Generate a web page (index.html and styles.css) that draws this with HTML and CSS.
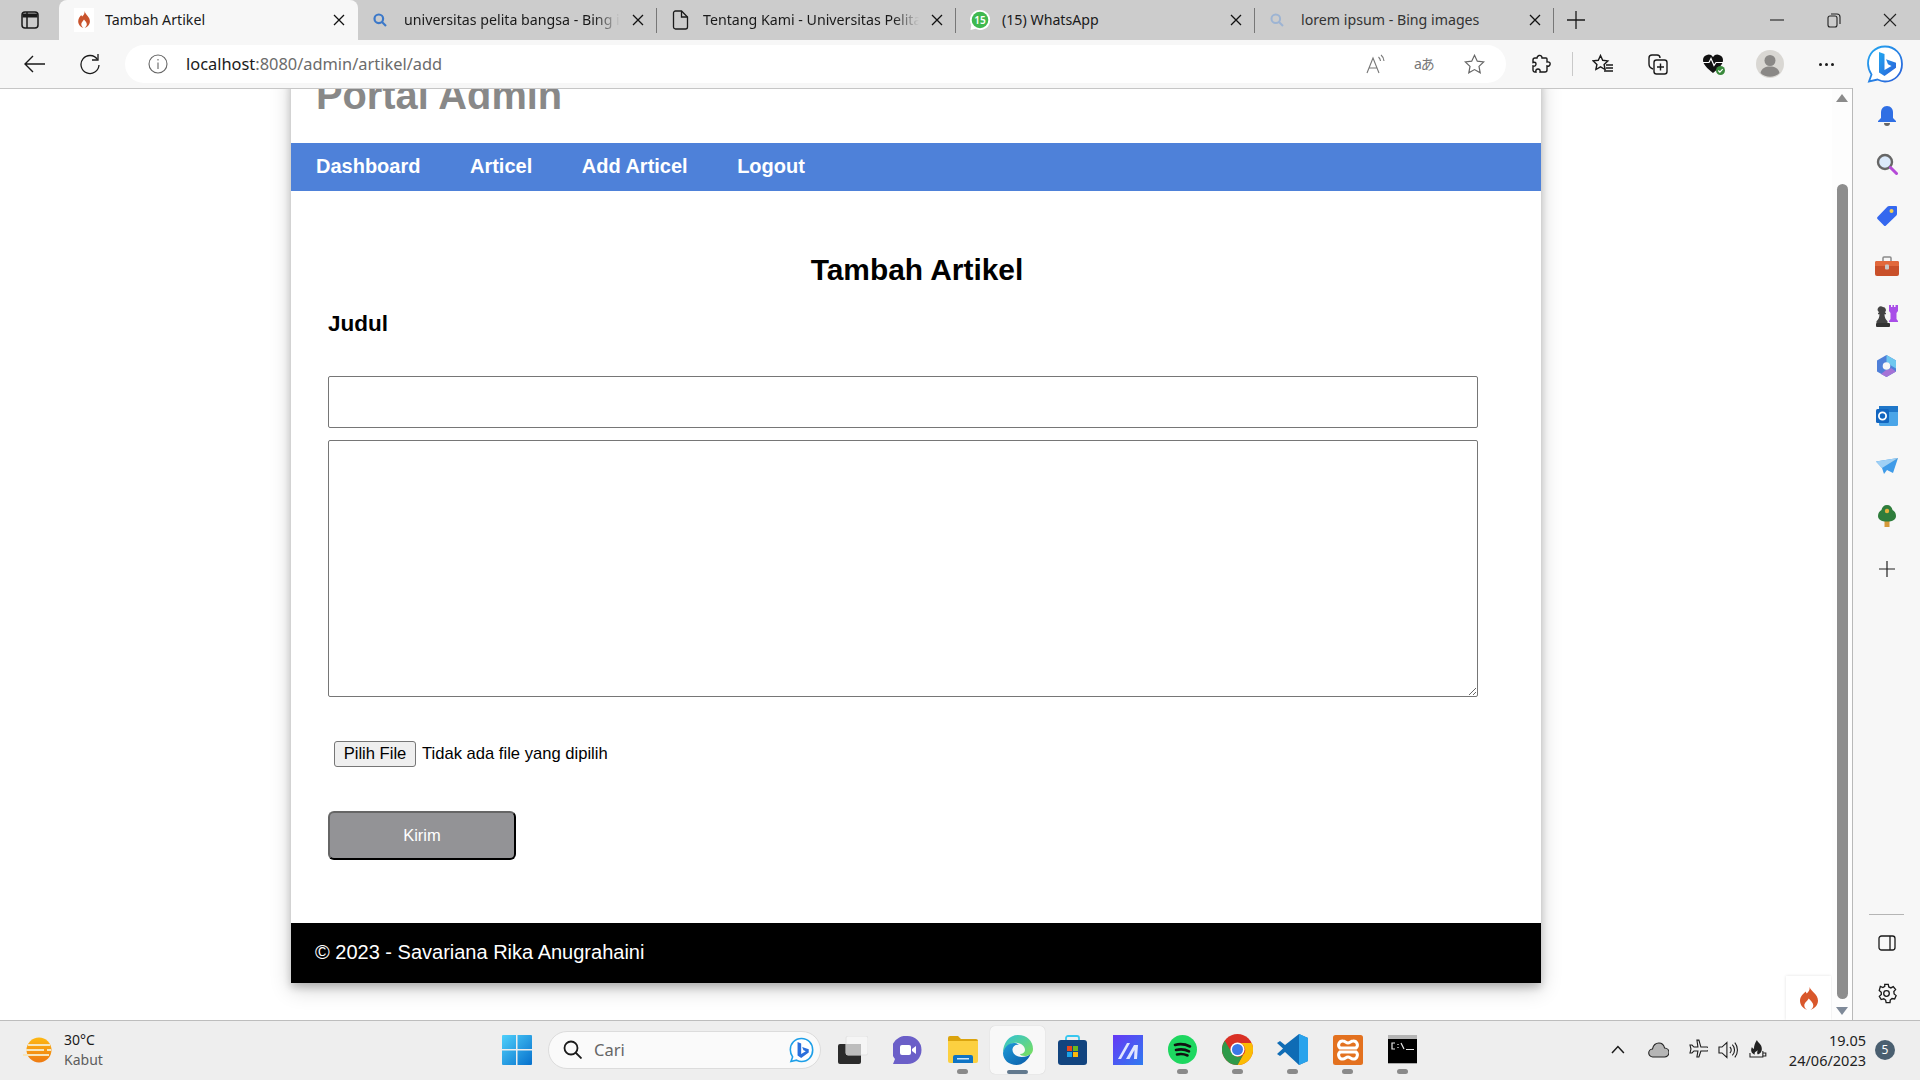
FILE: index.html
```html
<!DOCTYPE html>
<html lang="id">
<head>
<meta charset="utf-8">
<title>Tambah Artikel</title>
<link rel="stylesheet" href="styles.css">
</head>
<body>
<div class="app">

  <div class="tabbar">
    <div class="tab-toggle">
      <svg width="18" height="18" viewBox="0 0 18 18" fill="none" stroke="#1a1a1a"><rect x="1" y="1" width="16" height="16" rx="3" stroke-width="1.5"/><path d="M6 1v16" stroke-width="1.5"/><path d="M1.5 4.5h15" stroke-width="4"/></svg>
    </div>
    <div class="tab tab-active">
      <span class="tab-icon"><svg width="20" height="24" viewBox="0 0 20 24"><rect width="20" height="24" fill="#fff"/><path fill="#c9532c" d="M10.5 3c.6 2.6-1 4-2.4 5.600-.5-.6-.7-1.200-.7-1.700C5.700 8.500 4.200 10.700 4.200 13.200c0 3.200 2.200 5.800 5.200 6.600-1.300-.8-2.100-2.100-2.100-3.500 0-1.700 1.500-2.800 2.700-4.800 1.300 1.500 2.800 3 2.800 4.800 0 1.400-.8 2.700-2.100 3.500 3-.8 5.200-3.400 5.200-6.600C15.900 8.800 11.800 7.200 10.500 3z"/></svg></span>
      <span class="tab-title">Tambah Artikel</span>
      <svg class="tab-close" width="12" height="12" viewBox="0 0 12 12"><path d="M1 1l10 10M11 1L1 11" stroke="#111" stroke-width="1.300"/></svg>
    </div>
    <div class="tab">
      <span class="tab-icon"><svg width="14" height="14" viewBox="0 0 14 14" fill="none" stroke="#3b78c9" stroke-width="2.200"><circle cx="5.800" cy="5.800" r="4.300"/><path d="M9 9l4 4"/></svg></span>
      <span class="tab-title tab-fade">universitas pelita bangsa - Bing images</span>
      <svg class="tab-close" width="12" height="12" viewBox="0 0 12 12"><path d="M1 1l10 10M11 1L1 11" stroke="#111" stroke-width="1.300"/></svg>
    </div>
    <div class="tab">
      <span class="tab-icon"><svg width="17" height="20" viewBox="0 0 17 20" fill="none" stroke="#1a1a1a" stroke-width="1.300"><path d="M3.500 1h6l6 6v10a2 2 0 0 1-2 2h-10a2 2 0 0 1-2-2V3a2 2 0 0 1 2-2z"/><path d="M9.500 1v6h6"/></svg></span>
      <span class="tab-title tab-fade">Tentang Kami - Universitas Pelita Bangsa</span>
      <svg class="tab-close" width="12" height="12" viewBox="0 0 12 12"><path d="M1 1l10 10M11 1L1 11" stroke="#111" stroke-width="1.300"/></svg>
    </div>
    <div class="tab">
      <span class="tab-icon tab-icon-wa"><svg width="20" height="24" viewBox="0 0 20 24"><path fill="#fff" d="M10 2a10 10 0 0 0-8.700 15L.5 22l5-1.200A10 10 0 1 0 10 2z"/><circle cx="10" cy="12" r="8.300" fill="#3fb94f"/><text class="wa-count" x="10" y="15.600" text-anchor="middle">15</text></svg></span>
      <span class="tab-title">(15) WhatsApp</span>
      <svg class="tab-close" width="12" height="12" viewBox="0 0 12 12"><path d="M1 1l10 10M11 1L1 11" stroke="#111" stroke-width="1.300"/></svg>
    </div>
    <div class="tab tab-loading">
      <span class="tab-icon"><svg width="14" height="14" viewBox="0 0 14 14" fill="none" stroke="#9db4d3" stroke-width="2"><circle cx="5.800" cy="5.800" r="4.300"/><path d="M9 9l4 4"/></svg></span>
      <span class="tab-title">lorem ipsum - Bing images</span>
      <svg class="tab-close" width="12" height="12" viewBox="0 0 12 12"><path d="M1 1l10 10M11 1L1 11" stroke="#111" stroke-width="1.300"/></svg>
    </div>
    <div class="tab-new"><svg width="18" height="18" viewBox="0 0 18 18"><path d="M9 0v18M0 9h18" stroke="#1a1a1a" stroke-width="1.300"/></svg></div>
    <div class="window-controls">
      <svg width="14" height="14" viewBox="0 0 14 14"><path d="M0 7h14" stroke="#222" stroke-width="1.100"/></svg>
      <svg width="14" height="16" viewBox="0 0 14 16" fill="none" stroke="#222" stroke-width="1.100"><rect x="1" y="4" width="9" height="11" rx="2"/><path d="M4 2h6a3 3 0 0 1 3 3v7"/></svg>
      <svg width="14" height="14" viewBox="0 0 14 14"><path d="M1 1l12 12M13 1L1 13" stroke="#222" stroke-width="1.100"/></svg>
    </div>
  </div>

  <div class="toolbar">
    <svg class="tool-back" width="21" height="18" viewBox="0 0 21 18" fill="none" stroke="#1a1a1a" stroke-width="1.400"><path d="M21 9H1M9 1L1 9l8 8"/></svg>
    <svg class="tool-reload" width="20" height="22" viewBox="0 0 20 22" fill="none" stroke="#1a1a1a" stroke-width="1.300"><path d="M17.500 6.500A9 9 0 1 0 19 12"/><path d="M18 1v6h-6"/></svg>
    <div class="address">
      <svg width="20" height="20" viewBox="0 0 20 20" fill="none" stroke="#666" stroke-width="1.100"><circle cx="10" cy="10" r="9"/><path d="M10 8.500V15M10 5v1.500"/></svg>
      <span class="url"><span class="url-host">localhost</span>:8080/admin/artikel/add</span>
      <div class="address-actions">
        <svg width="20" height="20" viewBox="0 0 20 20" fill="none" stroke="#777" stroke-width="1.100"><path d="M1 19L7 4l6 15M3.300 14h7.500"/><path d="M12.500 3a6 6 0 0 1 2 4M15 1a8 8 0 0 1 3 6"/></svg>
        <span class="translate-glyph">aあ</span>
        <svg width="21" height="20" viewBox="0 0 21 20" fill="none" stroke="#666" stroke-width="1.200"><path d="M10.500 1.300l2.800 5.900 6.400.8-4.700 4.400 1.200 6.400-5.700-3.200-5.700 3.200 1.200-6.400L1.300 8l6.400-.8z"/></svg>
      </div>
    </div>
    <div class="tool-cell">
      <svg width="19" height="20" viewBox="0 0 19 20" fill="none" stroke="#1a1a1a" stroke-width="1.400"><path d="M7 1.500c2-.5 3 1 3 2.500h4a1 1 0 0 1 1 1v3c2.500-.5 3.500 1 3 2.500-.4 1.500-1.500 2-3 1.500v4a2 2 0 0 1-2 2H8c.5-2-.5-3-2-3s-2.500 1-2 3H3a2 2 0 0 1-2-2v-4c2 .5 3-.5 3-2S3 8 1 8.500V6a2 2 0 0 1 2-2h2C5 3 5.500 2 7 1.500z"/></svg>
    </div>
    <span class="tool-sep"></span>
    <div class="tool-cell">
      <svg width="21" height="20" viewBox="0 0 21 20" fill="none" stroke="#1a1a1a" stroke-width="1.400"><path d="M8.500 1.500l2.200 4.800 5.100.6-3.700 3.500 1 5.100-4.600-2.600-4.600 2.600 1-5.100L1.200 6.900l5.100-.6z"/><path d="M14 11h7M14 14h7M12 17h9"/></svg>
    </div>
    <div class="tool-cell">
      <svg width="20" height="22" viewBox="0 0 20 22" fill="none" stroke="#1a1a1a" stroke-width="1.400"><path d="M5 16C2 15 1 13 1 11V5a3 3 0 0 1 3-3h5a3 3 0 0 1 3 3"/><rect x="6" y="7" width="13" height="14" rx="2.500"/><path d="M12.500 10.500v7M9 14h7"/></svg>
    </div>
    <div class="tool-cell">
      <svg width="24" height="24" viewBox="0 0 24 24"><path fill="#111" d="M11 21C5 16 1 12.500 1 8a5.500 5.500 0 0 1 10-3 5.500 5.500 0 0 1 10 3c0 4.500-4 8-10 13z"/><path fill="none" stroke="#fff" stroke-width="1.200" d="M1 10.500h6l2-4 3 7 2-3h7"/><circle cx="18.500" cy="18.500" r="4.500" fill="#3a8a3c"/><path fill="none" stroke="#fff" stroke-width="1.200" d="M16.300 18.500l1.600 1.700 2.800-3"/></svg>
    </div>
    <div class="tool-cell">
      <svg width="28" height="28" viewBox="0 0 28 28"><circle cx="14" cy="14" r="14" fill="#d9d7d3"/><circle cx="14" cy="10.500" r="5.500" fill="#8a8886"/><path fill="#8a8886" d="M4.500 23c1-5 5-6.500 9.500-6.500s8.500 1.500 9.500 6.500a14 14 0 0 1-19 0z"/></svg>
    </div>
    <div class="tool-cell tool-dots"><i></i><i></i><i></i></div>
    <div class="tool-bing">
      <svg width="38" height="38" viewBox="0 0 38 38"><defs><linearGradient id="bing" x1="0" y1="0" x2="1" y2="1"><stop offset="0" stop-color="#22a7f0"/><stop offset="1" stop-color="#2b5fd9"/></linearGradient></defs><path d="M19 1.500C9 1.500 2 9 2 18.500c0 4.500 1.500 8 3.500 11l-2.500 7 8.500-2c2.500 1.200 5 2 7.500 2 10 0 17-7.500 17-17.500S29 1.500 19 1.500z" fill="#fff" stroke="url(#bing)" stroke-width="1.800"/><path d="M13 7l5.500 2v16l7-4-3.500-1.700-2-5 10 3.500v5L18.500 31 13 27.500z" fill="url(#bing)"/></svg>
    </div>
  </div>

  <div class="workspace">
    <div class="viewport">
      <div class="page">
        <header class="page-header">
          <h1 class="portal-title">Portal Admin</h1>
        </header>
        <nav class="site-nav">
          <a class="nav-link">Dashboard</a>
          <a class="nav-link">Articel</a>
          <a class="nav-link">Add Articel</a>
          <a class="nav-link">Logout</a>
        </nav>
        <main class="page-main">
          <h2 class="form-heading">Tambah Artikel</h2>
          <form class="article-form">
            <h3 class="field-label">Judul</h3>
            <input class="field-input" type="text">
            <textarea class="field-area"></textarea>
            <div class="file-row">
              <button class="file-btn" type="button">Pilih File</button>
              <span class="file-note">Tidak ada file yang dipilih</span>
            </div>
            <button class="submit-btn" type="button">Kirim</button>
          </form>
        </main>
        <footer class="page-footer">© 2023 - Savariana Rika Anugrahaini</footer>
      </div>
      <div class="flame-widget">
        <svg width="20" height="25" viewBox="0 0 20 25"><path fill="#d9572b" d="M10.500 1c.7 3-1.100 4.700-2.800 6.500-.6-.7-.8-1.400-.8-2C4.400 7.500 1 10.600 1 14.800 1 19 4.100 22.700 8.200 24c-1.800-1.100-2.900-2.900-2.900-4.800 0-2.400 2.800-3.900 4.400-6.800 1.800 2.100 4.600 4.200 4.600 6.800 0 1.900-1.100 3.700-2.900 4.800 4.200-1.300 7.600-5 7.600-9.200C19 8 12.300 6 10.500 1z"/></svg>
      </div>
    </div>

    <div class="scrollbar">
      <svg class="scroll-up" width="12" height="8" viewBox="0 0 12 8"><path d="M6 0l6 8H0z" fill="#8b8b8b"/></svg>
      <div class="scroll-thumb"></div>
      <svg class="scroll-down" width="12" height="8" viewBox="0 0 12 8"><path d="M6 8L0 0h12z" fill="#7f8a99"/></svg>
    </div>

    <aside class="sidebar">
      <div class="side-cell"><svg width="20" height="22" viewBox="0 0 20 22"><path fill="#2f6fe4" d="M10 1c4 0 6 3 6 6.500V13l3 3v1H1v-1l3-3V7.500C4 4 6 1 10 1z"/><path fill="#666" d="M7 18h6a3 3 0 0 1-6 0z"/></svg></div>
      <div class="side-cell side-search"><svg width="22" height="22" viewBox="0 0 22 22"><circle cx="9" cy="9" r="7" fill="#dbe9fa" stroke="#666" stroke-width="2.400"/><path d="M14.500 14.500l6 6" stroke="#b54ad8" stroke-width="3" stroke-linecap="round"/></svg></div>
      <div class="side-cell"><svg width="22" height="22" viewBox="0 0 22 22"><path fill="#3568ef" d="M13 1h7a1 1 0 0 1 1 1v7a2 2 0 0 1-.6 1.400L10 20.500a1.500 1.500 0 0 1-2.100 0l-6.400-6.400a1.500 1.500 0 0 1 0-2.100L11.600 1.600A2 2 0 0 1 13 1z"/><circle cx="15.500" cy="6" r="2" fill="#f6d04d"/></svg></div>
      <div class="side-cell"><svg width="24" height="20" viewBox="0 0 24 20"><path fill="none" stroke="#8a8a8a" stroke-width="1.500" d="M8 5V2a1 1 0 0 1 1-1h6a1 1 0 0 1 1 1v3"/><rect y="5" width="24" height="15" rx="2" fill="#c9502a"/><path fill="#e2693c" d="M0 7a2 2 0 0 1 2-2h20a2 2 0 0 1 2 2v3H0z"/><rect x="10" y="8.500" width="4" height="5" rx="1" fill="#c8c8c8"/></svg></div>
      <div class="side-cell"><svg width="24" height="22" viewBox="0 0 24 22"><path fill="#444" d="M8 2a3 3 0 0 1 2 5.200l1 1v1H9.500c0 3 1 5 3 7v2h-11v-2c2-2 3-4 3-7H3v-1l1-1A3 3 0 0 1 8 2z"/><rect x="1" y="18" width="14" height="4" rx="1" fill="#333"/><path fill="#a94ee8" d="M14 0h2v2h1.500V0h1.500v2h1.500V0H23v6l-1.500 2v6l1.500 2v1h-9v-1l1.500-2V8L14 6z"/></svg></div>
      <div class="side-cell"><svg width="21" height="22" viewBox="0 0 21 22"><path fill="#4f7fd8" d="M10.500 0L20 5.500v11L10.500 22 1 16.500v-11z"/><path fill="#6fc8ef" d="M10.500 0L20 5.500v8l-5-3a5.500 5.500 0 0 0-4.500-3z"/><path fill="#a573d6" d="M15 13l5 3.500L10.500 22 5 19l5-4a5 5 0 0 0 5-2z"/><circle cx="10.500" cy="11" r="3.800" fill="#f7f7f7"/></svg></div>
      <div class="side-cell"><svg width="22" height="22" viewBox="0 0 22 22"><rect x="3" y="1" width="19" height="20" rx="1.500" fill="#4aa5e8"/><path fill="#1f77c9" d="M3 1h19v6H3z"/><rect y="4" width="13" height="14" rx="1.500" fill="#1266c0"/><circle cx="6.500" cy="11" r="3.600" fill="none" stroke="#fff" stroke-width="1.800"/></svg></div>
      <div class="side-cell"><svg width="22" height="16" viewBox="0 0 22 16"><path fill="#3f9be8" d="M0 3.500L22 0l-5 15-6-3-3 4-2-6z"/><path fill="#f0a834" d="M6 9L22 0 10 5z"/><path fill="#9fd0f5" d="M0 3.500L22 0 6 10z"/></svg></div>
      <div class="side-cell"><svg width="18" height="22" viewBox="0 0 18 22"><rect x="6.500" y="14" width="5" height="8" fill="#d69a3a"/><path fill="#2f7d3c" d="M9 0c3 0 5 2 5.500 5 2 1 3.500 3 3.500 6 0 3.500-3 5.500-9 5.500S0 14.500 0 11c0-3 1.500-5 3.500-6C4 2 6 0 9 0z"/><circle cx="9" cy="6" r="2.200" fill="#e4b13c"/></svg></div>
      <div class="side-cell side-plus"><svg width="16" height="16" viewBox="0 0 16 16"><path d="M8 0v16M0 8h16" stroke="#222" stroke-width="1.200"/></svg></div>
      <div class="side-bottom">
        <span class="side-rule"></span>
        <div class="side-cell"><svg width="18" height="16" viewBox="0 0 18 16" fill="none" stroke="#1a1a1a" stroke-width="1.300"><rect x="1" y="1" width="16" height="14" rx="2.500"/><path d="M12 1v14"/></svg></div>
        <div class="side-cell"><svg width="21" height="21" viewBox="0 0 24 24" fill="none" stroke="#1a1a1a" stroke-width="1.500"><circle cx="12" cy="12" r="3.200"/><path d="M10 1.500h4l.6 3 2.400 1.100 2.700-1.500 2.700 3.400-2 2.300.3 2.700 2.300 1.900-1.700 3.900-3-.6-2 1.800-.3 3h-4.400l-.6-3-2.100-1.500-3 .9-2.100-3.700 2.300-2-.1-2.700-2.300-2L5 4l2.900 1.200L10 3.900z"/></svg></div>
      </div>
    </aside>
  </div>

  <div class="taskbar">
    <div class="weather">
      <svg width="30" height="26" viewBox="0 0 30 26"><defs><linearGradient id="sun" x1="0" y1="0" x2="0" y2="1"><stop offset="0" stop-color="#fdb813"/><stop offset="1" stop-color="#ee7a12"/></linearGradient></defs><circle cx="16" cy="13" r="12.500" fill="url(#sun)"/><path d="M5 8h22M3 13h18M24 13h4M0 18h26" stroke="#f6e6bd" stroke-width="2.200"/></svg>
      <div class="weather-text"><span class="weather-temp">30°C</span><span class="weather-desc">Kabut</span></div>
    </div>
    <svg class="win-logo" width="30" height="30" viewBox="0 0 30 30"><defs><linearGradient id="win" x1="0" y1="0" x2="1" y2="1"><stop offset="0" stop-color="#4fd0fb"/><stop offset="1" stop-color="#0670cc"/></linearGradient></defs><path fill="url(#win)" d="M1 0h13v14H0V1a1 1 0 0 1 1-1zM15.500 0H29a1 1 0 0 1 1 1v13H15.500zM0 15.500h14V30H1a1 1 0 0 1-1-1zM15.500 15.500H30V29a1 1 0 0 1-1 1H15.500z"/></svg>
    <div class="task-search">
      <svg width="19" height="19" viewBox="0 0 19 19" fill="none" stroke="#1a1a1a" stroke-width="1.800"><circle cx="8" cy="8" r="6.500"/><path d="M12.500 12.500l6 6"/></svg>
      <span class="task-search-text">Cari</span>
      <svg class="task-search-bing" width="25" height="26" viewBox="0 0 38 38"><path d="M19 1.500C9 1.500 2 9 2 18.500c0 4.500 1.500 8 3.500 11l-2.500 7 8.500-2c2.500 1.200 5 2 7.500 2 10 0 17-7.500 17-17.500S29 1.500 19 1.500z" fill="#fff" stroke="#1d9fe8" stroke-width="2.400"/><path d="M13 7l5.500 2v16l7-4-3.500-1.700-2-5 10 3.500v5L18.500 31 13 27.500z" fill="#2a6fdc"/></svg>
    </div>
    <div class="task-apps">
      <div class="task-app"><svg width="30" height="28" viewBox="0 0 30 28"><rect y="8" width="23" height="20" rx="2" fill="#2b2b2b"/><rect x="8" y="0" width="22" height="19" rx="2" fill="#f5f5f5" stroke="#e2e2e2"/><rect x="8" y="8" width="15" height="11" fill="#bdbdbd"/></svg></div>
      <div class="task-app"><svg width="29" height="28" viewBox="0 0 29 28"><path fill="#6b5fc8" d="M14.500 0a14 14 0 0 1 0 28H0l2-5A14 14 0 0 1 14.500 0z"/><rect x="7" y="9" width="11" height="10" rx="2" fill="#fff"/><path fill="#fff" d="M19 13l4-3v8l-4-3z"/></svg></div>
      <div class="task-app task-open"><svg width="30" height="27" viewBox="0 0 30 27"><path fill="#dba40e" d="M0 2a2 2 0 0 1 2-2h8l3 3h15a2 2 0 0 1 2 2v4H0z"/><path fill="#fcd040" d="M0 5h30v20a2 2 0 0 1-2 2H2a2 2 0 0 1-2-2z"/><path fill="#0f74c4" d="M5 27v-6a2 2 0 0 1 2-2h16a2 2 0 0 1 2 2v6z"/><rect x="9" y="22" width="12" height="1.500" fill="#cde6fa"/></svg></div>
      <div class="task-app task-active"><svg width="30" height="30" viewBox="0 0 30 30"><defs><linearGradient id="edge" x1="0" y1="0" x2="1" y2="1"><stop offset="0" stop-color="#1f9bd8"/><stop offset="1" stop-color="#0a5ba8"/></linearGradient><linearGradient id="edge2" x1="0" y1="0" x2="1" y2="1"><stop offset="0" stop-color="#2fc1d8"/><stop offset="1" stop-color="#7be05a"/></linearGradient></defs><path fill="url(#edge2)" d="M15 0c9 0 15 6 15 14 0 5-4 7-8 7-3 0-5-1-5-2 3 0 5-2 5-4 0-4-5-8-11-7C6 9 1 13 0 18 0 8 6 0 15 0z"/><path fill="url(#edge)" d="M0 18c1-6 6-10 11-10 2 0 4 .6 5 2-3-1-6 1-6.500 4-.5 4 3 8 9 8 4 0 7-1 9-3-2 6-8 11-14 11C6 30 0 25 0 18z"/></svg></div>
      <div class="task-app"><svg width="29" height="30" viewBox="0 0 29 30"><path fill="none" stroke="#38c7ef" stroke-width="1.800" d="M8 6V3a2 2 0 0 1 2-2h9a2 2 0 0 1 2 2v3"/><rect y="5" width="29" height="25" rx="3" fill="#12447f"/><rect x="9" y="11" width="5" height="5" fill="#e8481c"/><rect x="15" y="11" width="5" height="5" fill="#6cb81e"/><rect x="9" y="17" width="5" height="5" fill="#1aa2e8"/><rect x="15" y="17" width="5" height="5" fill="#fcb90b"/></svg></div>
      <div class="task-app"><svg width="30" height="30" viewBox="0 0 30 30"><defs><linearGradient id="mt" x1="0" y1="0" x2="1" y2="1"><stop offset="0" stop-color="#6638f5"/><stop offset="1" stop-color="#2f7bf0"/></linearGradient></defs><rect width="30" height="30" fill="url(#mt)"/><path fill="#dfe6ff" d="M5 24L14 8h3l-9 16zM13 24l8-14h4l-1 14h-3l.5-9-5 9z"/></svg></div>
      <div class="task-app task-open"><svg width="29" height="29" viewBox="0 0 29 29"><circle cx="14.500" cy="14.500" r="14.500" fill="#1ed760"/><path fill="none" stroke="#111" stroke-width="2.600" stroke-linecap="round" d="M7 10c5-1.500 10-1 15 1.500M8 15c4-1 9-.8 13 1.300M9 19.500c3.500-.8 7-.6 10.500 1"/></svg></div>
      <div class="task-app task-open"><svg width="31" height="31" viewBox="0 0 31 31"><circle cx="15.500" cy="15.500" r="15.500" fill="#d93025"/><path fill="#fbbc04" d="M15.500 9H29.700a15.500 15.500 0 0 1-14.200 22L21 21a7 7 0 0 0-5.500-12z"/><path fill="#2e9a49" d="M2.800 6.700L10 19a7 7 0 0 0 11 2l-5.500 10A15.500 15.500 0 0 1 2.800 6.700z"/><circle cx="15.500" cy="15.500" r="7" fill="#fff"/><circle cx="15.500" cy="15.500" r="5.500" fill="#3b78e7"/></svg></div>
      <div class="task-app task-open"><svg width="31" height="31" viewBox="0 0 31 31"><path fill="#0f6cb5" d="M22 0l9 4v23l-9 4-14-13-5 4-3-2 6-5.500L0 9l3-2 5 4z"/><path fill="#29a3ec" d="M22 0l9 4v23l-9 4z"/></svg></div>
      <div class="task-app task-open"><svg width="30" height="30" viewBox="0 0 30 30"><rect width="30" height="30" rx="2.500" fill="#e3711f"/><path fill="none" stroke="#fff" stroke-width="3" d="M10 6a4 4 0 0 0-3 7h16a4 4 0 0 0-3-7c-2 0-3 2-5 2s-3-2-5-2zM7 17a4 4 0 0 0 3 7c2 0 3-2 5-2s3 2 5 2a4 4 0 0 0 3-7z"/></svg></div>
      <div class="task-app task-open"><svg width="29" height="29" viewBox="0 0 29 29"><rect width="29" height="29" fill="#000"/><rect width="29" height="4" fill="#b5b5b5"/><rect y="28" width="29" height="1" fill="#aaa"/><path fill="none" stroke="#e6e6e6" stroke-width="1.200" d="M7 8H4v6h3M10 9v1M10 12v1M13 8l3 6M18 14.500h8"/></svg></div>
    </div>
    <div class="tray">
      <svg class="tray-chevron" width="14" height="9" viewBox="0 0 14 9" fill="none" stroke="#1a1a1a" stroke-width="1.500"><path d="M1 8l6-6.500L13 8"/></svg>
      <svg class="tray-cloud" width="21" height="16" viewBox="0 0 21 16"><path fill="#b5b5b5" stroke="#222" stroke-width="1.100" d="M5 15a4 4 0 0 1-.5-8C5.500 3 8 1 11 1s5 2 5.800 5A4.500 4.500 0 0 1 16.500 15z"/></svg>
      <svg width="20" height="22" viewBox="0 0 20 22" fill="none" stroke="#1a1a1a" stroke-width="1.100"><path d="M8 1h2l2 7h6a1.500 1.500 0 0 1 0 4h-6l-2 6H8l1-6H5l-2 2H1l1-4-1-4h2l2 2h4z"/></svg>
      <svg width="20" height="18" viewBox="0 0 20 18" fill="none" stroke="#1a1a1a" stroke-width="1.100"><path d="M1 6h3l5-4.500v15L4 12H1zM12 6a4 4 0 0 1 0 6M14.500 3.500a8 8 0 0 1 0 11M17 1.500a12 12 0 0 1 0 15"/></svg>
      <svg width="20" height="22" viewBox="0 0 20 22"><path fill="#222" d="M9 1c1 3 5 4 5 9 0 3-2 5-4 5.500-1-1-1-2.500 0-4-2 1-4 2-3 4C4 15 2 12 4 8c.5 1 1 1.500 2 2 0-3 1-6 3-9z"/><path fill="none" stroke="#222" stroke-width="1.100" d="M2 14v4h13v-6M15 14h3v3h-3"/></svg>
    </div>
    <div class="clock"><span>19.05</span><span>24/06/2023</span></div>
    <span class="notif-badge">5</span>
  </div>

</div>
</body>
</html>
```

FILE: styles.css
```css
* { box-sizing: border-box; }
html, body { margin: 0; height: 100%; overflow: hidden; background: #fff; }
body { font-family: "Noto Sans", "Open Sans", sans-serif; color: #1a1a1a; }
.app { width: 1920px; height: 1080px; display: flex; flex-direction: column; }

/* tab strip */
.tabbar { height: 40px; background: #cccccc; display: flex; align-items: stretch; flex: none; }
.tab-toggle { width: 59px; padding-left: 21px; display: flex; align-items: center; }
.tab { width: 299px; display: flex; align-items: center; padding: 0 13px 0 15px; position: relative; font-size: 14.200px; }
.tab::after { content: ""; position: absolute; right: 0; top: 8px; height: 25px; width: 1px; background: #777; }
.tab-active { background: #f7f7f7; border-radius: 8px 8px 0 0; }
.tab-active::after { display: none; }
.tab-icon { width: 20px; margin-right: 11px; display: flex; align-items: center; flex: none; }
.tab-icon-wa { margin-left: -1px; margin-right: 12px; }
.tab-title { flex: 1; white-space: nowrap; overflow: hidden; color: #1a1a1a; padding-bottom: 2px; }
.tab-fade { -webkit-mask-image: linear-gradient(to right, #000 88%, transparent 100%); mask-image: linear-gradient(to right, #000 88%, transparent 100%); margin-right: 12px; }
.tab-loading .tab-title { color: #333; }
.tab-close { flex: none; }
.wa-count { font-size: 10px; font-weight: 600; fill: #fff; font-family: "Noto Sans", sans-serif; }
.tab-new { width: 50px; padding-left: 13px; display: flex; align-items: center; }
.window-controls { margin-left: auto; width: 150px; padding-right: 23px; display: flex; align-items: center; justify-content: space-between; }

/* toolbar */
.toolbar { height: 49px; flex: none; background: #f7f7f7; border-bottom: 1px solid #c6c6c6; padding: 5px 0 5px 24px; display: flex; align-items: center; }
.tool-back { flex: none; }
.tool-reload { flex: none; margin-left: 35px; }
.address { width: 1381px; height: 38px; margin-left: 25px; background: #fff; border-radius: 19px; display: flex; align-items: center; padding: 0 21px 0 23px; flex: none; }
.url { margin-left: 18px; padding-bottom: 2px; font-size: 16.400px; color: #6b6b6b; }
.url-host { color: #1a1a1a; }
.address-actions { margin-left: auto; display: flex; align-items: center; gap: 28px; }
.translate-glyph { width: 22px; font-family: "Noto Sans", "Noto Sans CJK JP", sans-serif; font-size: 14px; line-height: 20px; letter-spacing: -1px; color: #777; white-space: nowrap; }
.tool-cell { width: 56px; height: 38px; display: flex; align-items: center; justify-content: center; flex: none; }
.address + .tool-cell { margin-left: 7px; }
.tool-sep { width: 1px; height: 24px; background: #c9c9c9; margin: 0 1px 0 3px; flex: none; }
.tool-dots { gap: 3px; }
.tool-dots i { width: 3px; height: 3px; border-radius: 50%; background: #1a1a1a; }
.tool-bing { width: 38px; height: 38px; margin-left: 12px; flex: none; }

/* workspace */
.workspace { height: 931px; flex: none; display: flex; background: #fff; }
.viewport { width: 1832px; position: relative; overflow: hidden; flex: none; }
.page { width: 1250px; margin: -17px auto 0; background: #fff; box-shadow: 0 4px 8px rgba(0, 0, 0, .2), 0 6px 20px rgba(0, 0, 0, .19); font-family: "Liberation Sans", Arial, sans-serif; color: #000; }
.page-header { padding: 0 25px 25px; }
.portal-title { margin: 0; font-size: 39.800px; line-height: 46px; font-weight: 700; color: #888; }
.site-nav { height: 48px; padding-bottom: 2px; background: #4e81d9; display: flex; align-items: center; }
.nav-link { padding: 0 25px 0 24.500px; font-size: 20px; font-weight: 700; color: #fff; }
.nav-link:first-child { padding-left: 25px; }
.page-main { padding: 62px 35px 63px 37px; }
.form-heading { margin: 0; font-size: 29.900px; line-height: 34px; font-weight: 700; text-align: center; }
.article-form { margin-top: 24px; }
.field-label { margin: 0; font-size: 22.500px; line-height: 26px; font-weight: 700; }
.field-input { display: block; width: 1150px; height: 52px; margin-top: 39px; border: 1px solid #767676; border-radius: 2px; background: #fff; }
.field-area { display: block; width: 1150px; height: 257px; margin-top: 12px; border: 1px solid #767676; border-radius: 2px; background: #fff; }
.file-row { margin: 44px 0 0 6px; display: flex; align-items: center; height: 26px; font-size: 16.600px; }
.file-btn { width: 82px; height: 26px; padding: 0; border: 1px solid #767676; border-radius: 3px; background: #efefef; font: 16.600px "Liberation Sans", Arial, sans-serif; color: #000; }
.file-note { margin-left: 6px; }
.submit-btn { display: block; width: 188px; height: 49px; margin-top: 44px; border: 2px solid; border-color: #666 #000 #000 #666; border-radius: 6px; background: #939396; color: #fff; font: 16.500px "Liberation Sans", Arial, sans-serif; }
.page-footer { height: 60px; background: #000; color: #fff; padding: 0 24px 2px; display: flex; align-items: center; font-size: 20px; }
.flame-widget { position: absolute; right: 1px; bottom: 0; width: 45px; height: 44px; background: #fff; box-shadow: 0 0 3px rgba(0, 0, 0, .12); display: flex; align-items: center; justify-content: center; }

/* scrollbar */
.scrollbar { width: 20px; flex: none; background: #fdfdfd; display: flex; flex-direction: column; align-items: center; padding-top: 5px; }
.scroll-up, .scroll-down { flex: none; }
.scroll-thumb { width: 11px; height: 815px; margin: 82px 0 8px; background: #8d8d8d; border-radius: 6px; }

/* sidebar */
.sidebar { width: 68px; flex: none; margin-top: -1px; background: #f7f7f7; border-left: 1px solid #b9b9b9; display: flex; flex-direction: column; align-items: center; padding-top: 3px; }
.side-cell { width: 40px; height: 50px; display: flex; align-items: center; justify-content: center; flex: none; }
.side-search { height: 46px; margin-bottom: 4px; }
.side-plus { margin-top: 3px; }
.side-bottom { margin-top: auto; display: flex; flex-direction: column; align-items: center; padding-bottom: 2px; }
.side-rule { width: 35px; height: 1px; background: #b5b5b5; margin-bottom: 3px; }

/* taskbar */
.taskbar { height: 60px; flex: none; background: #eeeeee; border-top: 1px solid #bdbdbd; display: flex; align-items: center; padding: 0 0 2px 23px; }
.weather { width: 479px; display: flex; align-items: center; gap: 11px; flex: none; }
.weather-text { display: flex; flex-direction: column; font-size: 14px; line-height: 20px; }
.weather-desc { color: #5d5d5d; }
.win-logo { flex: none; }
.task-search { width: 273px; height: 38px; margin-left: 16px; flex: none; background: #fafafa; border: 1px solid #dcdcdc; border-radius: 19px; display: flex; align-items: center; padding: 0 6px 0 14px; }
.task-search-text { margin-left: 12px; font-size: 16.500px; color: #666; }
.task-search-bing { margin-left: auto; }
.task-apps { display: flex; margin-left: 4px; flex: none; }
.task-app { width: 55px; height: 48px; display: flex; align-items: center; justify-content: center; position: relative; flex: none; }
.task-open::after { content: ""; position: absolute; left: 22px; bottom: 0; width: 11px; height: 5px; border-radius: 3px; background: #8a8a8a; }
.task-active { background: #f8f8f8; border-radius: 5px; box-shadow: 0 0 1px rgba(0, 0, 0, .2); }
.task-active::after { content: ""; position: absolute; left: 17px; bottom: 0; width: 21px; height: 4px; border-radius: 2px; background: #62798e; }
.tray { margin-left: 181px; width: 157px; display: flex; align-items: center; gap: 10px; flex: none; }
.tray-chevron { margin-right: 13px; }
.tray-cloud { margin-right: 10px; }
.clock { margin-left: 20px; width: 78px; flex: none; display: flex; flex-direction: column; align-items: flex-end; font-size: 14.500px; line-height: 20px; color: #222; white-space: nowrap; }
.notif-badge { width: 20px; height: 20px; margin-left: 9px; border-radius: 50%; background: #4a5f70; color: #fff; font-size: 12px; display: flex; align-items: center; justify-content: center; flex: none; }
```
